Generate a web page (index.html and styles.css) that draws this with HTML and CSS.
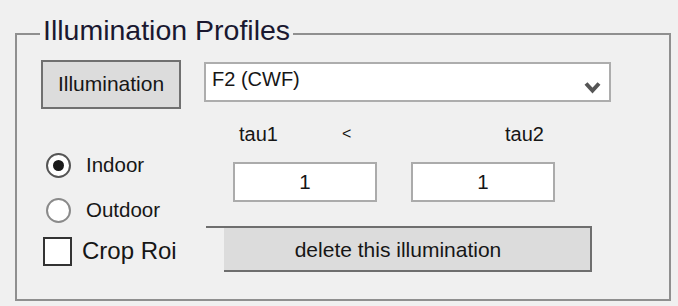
FILE: index.html
```html
<!DOCTYPE html>
<html lang="en">
<head>
<meta charset="utf-8">
<title>Illumination Profiles</title>
<link rel="stylesheet" href="styles.css">
</head>
<body>
<fieldset class="group">
  <legend class="group-title">Illumination Profiles</legend>
  <div class="top-row">
    <button class="btn-illum" type="button">Illumination</button>
    <div class="select">
      <span class="select-value">F2 (CWF)</span>
      <svg class="chevron" width="17" height="13" viewBox="0 0 17 13" aria-hidden="true">
        <polyline points="2,2.5 8.5,9.5 15,2.5" fill="none" stroke="#555" stroke-width="4" stroke-linejoin="miter"/>
      </svg>
    </div>
  </div>
  <div class="main-row">
    <div class="options">
      <label class="radio-row"><span class="radio checked"></span><span>Indoor</span></label>
      <label class="radio-row"><span class="radio"></span><span>Outdoor</span></label>
      <label class="check-row"><span class="checkbox"></span><span>Crop Roi</span></label>
    </div>
    <div class="params">
      <div class="labels">
        <span class="lbl-tau1">tau1</span>
        <span class="lbl-lt">&lt;</span>
        <span class="lbl-tau2">tau2</span>
      </div>
      <div class="inputs">
        <div class="field">1</div>
        <div class="field">1</div>
      </div>
      <button class="btn-delete" type="button">delete this illumination</button>
    </div>
  </div>
</fieldset>
</body>
</html>
```
FILE: styles.css
```css
html, body {
  margin: 0;
  padding: 0;
}
body {
  width: 678px;
  height: 306px;
  overflow: hidden;
  background: #f0f0f0;
  font-family: "Liberation Sans", Arial, sans-serif;
  color: #161616;
}
.group {
  margin: 16px 7px 0 15px;
  padding: 0 0 27px 0;
  border: 2px solid #8f8f8f;
  min-width: 0;
}
.group-title {
  margin-left: 23px;
  padding: 0 3px 8px 3px;
  font-size: 28.5px;
  line-height: 28.5px;
  color: #1a1830;
}
.top-row {
  display: flex;
  align-items: flex-start;
  gap: 23px;
  margin-top: 7px;
  padding-left: 24px;
}
.btn-illum {
  box-sizing: border-box;
  width: 140px;
  height: 49px;
  padding: 0;
  border: 2px solid #707070;
  background: #dcdcdc;
  font-family: "Liberation Sans", Arial, sans-serif;
  font-size: 21px;
  color: #161616;
}
.select {
  box-sizing: border-box;
  display: flex;
  align-items: flex-start;
  width: 407px;
  height: 40px;
  margin-top: 2px;
  padding: 5px 8px 0 6px;
  border: 2px solid #adadad;
  background: #ffffff;
  font-size: 20px;
  line-height: 20px;
}
.chevron {
  margin-left: auto;
  margin-top: 12px;
  display: block;
}
.main-row {
  display: flex;
  margin-top: 15px;
}
.options {
  box-sizing: border-box;
  width: 189px;
  display: flex;
  flex-direction: column;
  padding-top: 19px;
  padding-left: 29px;
}
.radio-row {
  display: flex;
  align-items: center;
  gap: 15px;
  height: 45px;
  font-size: 20.5px;
}
.radio {
  box-sizing: border-box;
  width: 25px;
  height: 25px;
  border-radius: 50%;
  border: 2px solid #8a8a8a;
  background: #ffffff;
  display: grid;
  place-items: center;
}
.radio.checked {
  border-color: #555555;
}
.radio.checked::after {
  content: "";
  width: 11px;
  height: 11px;
  border-radius: 50%;
  background: #1a1a1a;
}
.check-row {
  display: flex;
  align-items: center;
  gap: 10px;
  height: 29px;
  margin-top: 4px;
  margin-left: -3px;
  font-size: 24px;
}
.checkbox {
  box-sizing: border-box;
  width: 29px;
  height: 29px;
  border: 2px solid #333333;
  background: #ffffff;
}
.params {
  width: 386px;
}
.labels {
  display: flex;
  height: 20px;
  font-size: 20px;
  line-height: 20px;
}
.lbl-tau1 {
  margin-left: 33px;
  width: 103px;
}
.lbl-lt {
  width: 163px;
  font-size: 16px;
}
.inputs {
  display: flex;
  gap: 34px;
  margin-top: 18px;
  padding-left: 27px;
}
.field {
  box-sizing: border-box;
  width: 144px;
  height: 40px;
  border: 2px solid #ababab;
  background: #ffffff;
  display: flex;
  align-items: center;
  justify-content: center;
  font-size: 20.5px;
}
.btn-delete {
  display: block;
  box-sizing: border-box;
  width: 386px;
  height: 46px;
  margin-top: 24px;
  padding: 0;
  border: none;
  border-top: 2px solid #6e6e6e;
  border-right: 2px solid #6e6e6e;
  background:
    linear-gradient(#6e6e6e, #6e6e6e) right bottom / calc(100% - 18px) 2px no-repeat,
    linear-gradient(to right, #f0f0f0 18px, #dcdcdc 18px);
  font-family: "Liberation Sans", Arial, sans-serif;
  font-size: 21px;
  color: #161616;
}
```
